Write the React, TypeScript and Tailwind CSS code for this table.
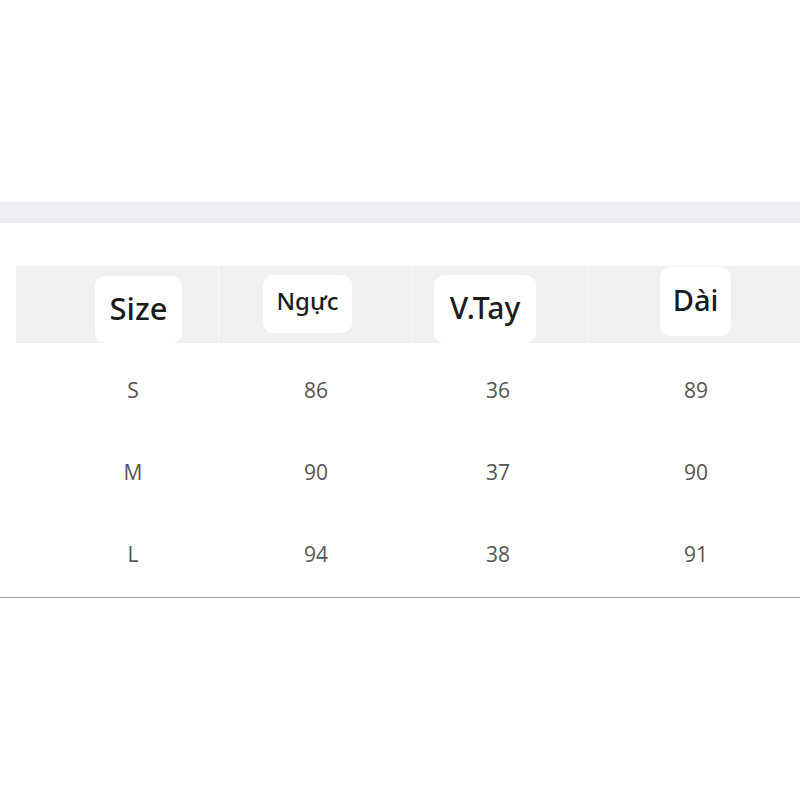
import React from 'react';

const rows = [
  ['S', '86', '36', '89'],
  ['M', '90', '37', '90'],
  ['L', '94', '38', '91'],
];

const labelFont = { fontFamily: '"Noto Sans", "Open Sans", sans-serif' };

export default function App() {
  return (
    <div className="w-[800px] h-[800px] bg-white overflow-hidden" style={{ fontFamily: '"Open Sans", "Noto Sans", sans-serif' }}>
      <div className="h-[202px]" />
      <div className="h-[21px] bg-[#eeeef2]" />
      <div className="h-[43px]" />

      {/* header */}
      <div className="ml-[16px] h-[77px] bg-[#f1f1f1] flex text-[#1c1c1c] font-medium" style={labelFont}>
        <div className="w-[203px] border-r border-[#fafafa]">
          <div className="ml-[79px] mt-[10px] w-[87px] h-[67px] bg-white rounded-[10px] flex items-center justify-center">
            <span className="text-[31px] leading-none -mt-[2px]">Size</span>
          </div>
        </div>
        <div className="w-[194px] border-r border-[#fafafa]">
          <div className="ml-[44px] mt-[9px] w-[89px] h-[58px] bg-white rounded-[10px] flex items-center justify-center">
            <span className="text-[24px] leading-none -mt-[6px]">Ngực</span>
          </div>
        </div>
        <div className="w-[176px] border-r border-[#fafafa]">
          <div className="ml-[21px] mt-[9px] w-[102px] h-[68px] bg-white rounded-[10px] flex items-center justify-center">
            <span className="text-[30px] leading-none -mt-[2px]">V.Tay</span>
          </div>
        </div>
        <div className="flex-1">
          <div className="ml-[71px] mt-[1px] w-[71px] h-[69px] bg-white rounded-[10px] flex items-center justify-center">
            <span className="text-[29px] leading-none -mt-[4px]">Dài</span>
          </div>
        </div>
      </div>

      {/* data rows */}
      <div className="mt-[7px]">
        {rows.map((r) => (
          <div key={r[0]} className="h-[82px] flex items-center pl-[93px] text-[21px] text-[#555]">
            <div className="w-[80px] text-center">{r[0]}</div>
            <div className="w-[80px] ml-[103px] text-center">{r[1]}</div>
            <div className="w-[80px] ml-[102px] text-center">{r[2]}</div>
            <div className="w-[80px] ml-[118px] text-center">{r[3]}</div>
          </div>
        ))}
      </div>
      <div className="mt-[1px] border-t border-[#9a9a9a]" />
    </div>
  );
}
